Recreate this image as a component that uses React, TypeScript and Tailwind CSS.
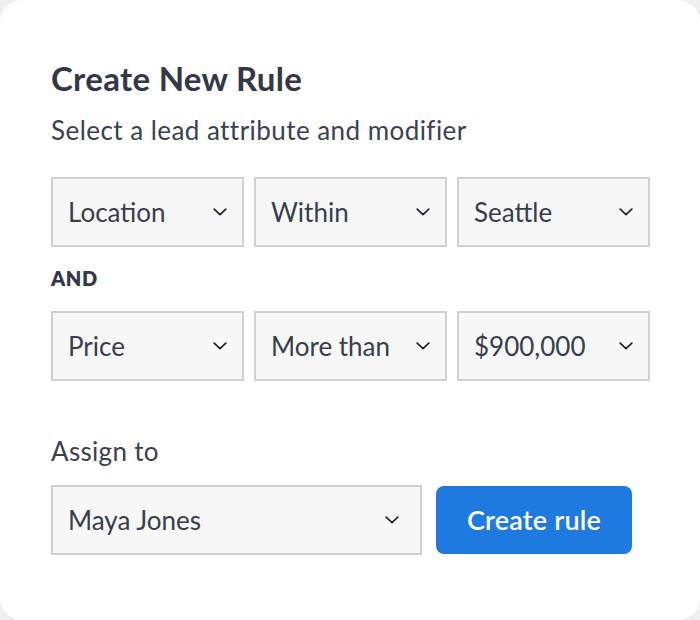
import React from 'react';

const Chevron: React.FC = () => (
  <svg width="14" height="8" viewBox="0 0 14 8" fill="none" className="shrink-0">
    <path d="M1.2 1.2L7 6.6l5.8-5.4" stroke="#1f2330" strokeWidth="1.7" strokeLinecap="round" strokeLinejoin="round" />
  </svg>
);

type SelectProps = { value: string; className?: string };

const FakeSelect: React.FC<SelectProps> = ({ value, className = '' }) => (
  <div
    className={`flex h-[70px] items-center justify-between border-2 border-[#d0d0d0] bg-[#f7f7f7] pl-[15px] pr-[15px] text-[26px] leading-[32px] text-[#383e4e] ${className}`}
  >
    <span className="whitespace-nowrap">{value}</span>
    <Chevron />
  </div>
);

const rows = [
  ['Location', 'Within', 'Seattle'],
  ['Price', 'More than', '$900,000'],
];

export default function App() {
  return (
    <div className="h-[620px] w-[700px] bg-[#efefef] font-['Lato','Liberation_Sans',sans-serif]">
      <div className="flex h-full w-full flex-col rounded-[22px] bg-white px-[51px] pt-[58px]">
        <h1 className="text-[33px] font-bold leading-[40px] tracking-[0.3px] text-[#323848]">Create New Rule</h1>
        <p className="mt-[16px] text-[26px] leading-[32px] tracking-[0.45px] text-[#3b4151]">
          Select a lead attribute and modifier
        </p>

        <div className="mt-[31px] grid w-[599px] grid-cols-3 gap-[10px]">
          {rows[0].map((v) => (
            <FakeSelect key={v} value={v} />
          ))}
        </div>

        <div className="mt-[19px] text-[20px] font-extrabold leading-[24px] tracking-[0.6px] text-[#323848]">AND</div>

        <div className="mt-[21px] grid w-[599px] grid-cols-3 gap-[10px]">
          {rows[1].map((v) => (
            <FakeSelect key={v} value={v} />
          ))}
        </div>

        <div className="mt-[54px] text-[26px] leading-[32px] tracking-[0.3px] text-[#3b4151]">Assign to</div>

        <div className="mt-[18px] flex items-center gap-[14px]">
          <FakeSelect value="Maya Jones" className="w-[371px] pr-[21px]" />
          <button className="flex h-[68px] w-[196px] items-center justify-center rounded-[8px] bg-[#1f7ae0] text-[27px] font-semibold leading-[32px] tracking-[0.2px] text-white">
            Create rule
          </button>
        </div>
      </div>
    </div>
  );
}
